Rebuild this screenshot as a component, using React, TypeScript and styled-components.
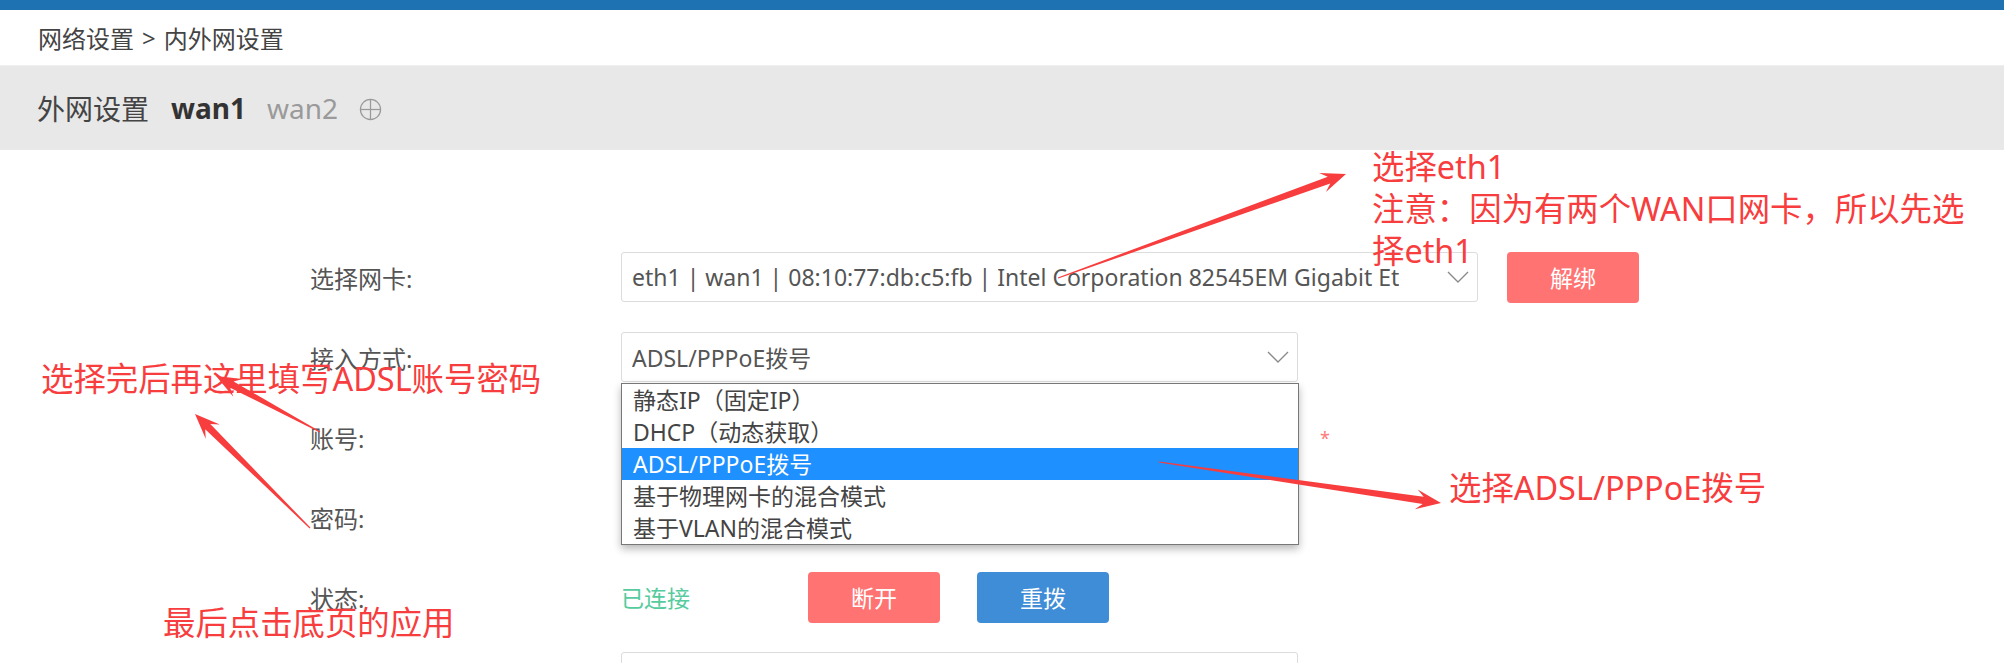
import React from 'react';
import styled, { createGlobalStyle } from 'styled-components';

const GlobalStyle = createGlobalStyle`
  html, body { margin: 0; padding: 0; background: #fff; }
  body { font-family: "Noto Sans", "Noto Sans CJK SC", sans-serif; }
  * { box-sizing: border-box; }
`;

const FONT = `"Noto Sans", "Noto Sans CJK SC", sans-serif`;

const Page = styled.div`
  position: relative;
  width: 2004px;
  height: 663px;
  overflow: hidden;
  background: #fff;
  font-family: ${FONT};
`;

const TopBar = styled.div`
  height: 10px;
  background: #1e72b2;
`;

const Breadcrumb = styled.div`
  height: 55px;
  display: flex;
  align-items: center;
  padding-left: 38px;
  font-size: 24px;
  color: #444;
  gap: 8px;
`;

const TabBar = styled.div`
  height: 85px;
  background: #e8e8e8;
  display: flex;
  align-items: center;
  padding-left: 37px;
  border-top: 1px solid #f0f0f0;
`;

const TabTitle = styled.span`
  font-size: 28px;
  color: #444;
  margin-right: 22px;
`;

const Tab = styled.span<{ $active?: boolean }>`
  font-size: 28px;
  font-weight: ${(p) => (p.$active ? 700 : 400)};
  color: ${(p) => (p.$active ? '#333' : '#9a9a9a')};
  margin-right: 21px;
`;

const AddIcon = styled.svg`
  width: 23px;
  height: 23px;
  margin-top: 3px;
`;

const Form = styled.div`
  display: flex;
  flex-direction: column;
  gap: 30px;
  padding: 102px 0 0 310px;
`;

const Row = styled.div`
  display: flex;
  align-items: center;
  height: 50px;
`;

const Label = styled.div`
  width: 311px;
  font-size: 24px;
  color: #555;
`;

const SelectBox = styled.div<{ $w: number }>`
  position: relative;
  width: ${(p) => p.$w}px;
  height: 50px;
  border: 1px solid #dcdcdc;
  border-radius: 3px;
  display: flex;
  align-items: center;
  padding: 0 46px 0 10px;
  font-size: 23px;
  color: #555;
  background: #fff;
`;

const SelectText = styled.div`
  white-space: nowrap;
  overflow: hidden;
`;

const Chevron = styled.svg`
  position: absolute;
  right: 8px;
  top: 18px;
  width: 22px;
  height: 12px;
`;

const InputBox = styled.div`
  width: 677px;
  height: 50px;
  border: 1px solid #dcdcdc;
  border-radius: 3px;
  background: #fff;
`;

const Button = styled.button<{ $color: string; $ml?: number }>`
  width: 132px;
  height: 51px;
  margin-left: ${(p) => p.$ml ?? 0}px;
  border: none;
  border-radius: 4px;
  background: ${(p) => p.$color};
  color: #fff;
  font-family: ${FONT};
  font-size: 23px;
  padding: 0;
`;

const SelectWrap = styled.div`
  position: relative;
`;

const DropList = styled.div`
  position: absolute;
  left: 0;
  top: calc(100% + 1px);
  width: 678px;
  border: 1px solid #777;
  background: #fff;
  box-shadow: 0 4px 8px rgba(0, 0, 0, 0.28);
  z-index: 10;
`;

const Option = styled.div<{ $selected?: boolean }>`
  height: 32px;
  line-height: 32px;
  padding-left: 11px;
  font-size: 23px;
  color: ${(p) => (p.$selected ? '#fff' : '#444')};
  background: ${(p) => (p.$selected ? '#1e90ff' : 'transparent')};
  white-space: nowrap;
`;

const Required = styled.span`
  margin-left: 22px;
  margin-top: 2px;
  font-size: 18px;
  color: #ff7b7b;
`;

const StatusText = styled.span`
  width: 187px;
  font-size: 23px;
  color: #55cb9e;
`;

const Note = styled.div<{ $x: number; $y: number }>`
  position: absolute;
  left: ${(p) => p.$x}px;
  top: ${(p) => p.$y}px;
  font-size: 32.4px;
  line-height: 42px;
  color: #f73d3d;
  white-space: nowrap;
  z-index: 20;
`;

const Overlay = styled.svg`
  position: absolute;
  left: 0;
  top: 0;
  width: 2004px;
  height: 663px;
  pointer-events: none;
  z-index: 30;
`;

function arrowPoints(x1: number, y1: number, x2: number, y2: number) {
  const dx = x2 - x1;
  const dy = y2 - y1;
  const L = Math.hypot(dx, dy);
  const ux = dx / L;
  const uy = dy / L;
  const px = -uy;
  const py = ux;
  const headLen = 25;
  const headW = 10;
  const shaftW = 3.6;
  const startW = 0.5;
  const bx = x2 - ux * headLen;
  const by = y2 - uy * headLen;
  const sx = x2 - ux * (headLen - 7);
  const sy = y2 - uy * (headLen - 7);
  const pts = [
    [x1 + px * startW, y1 + py * startW],
    [sx + px * shaftW, sy + py * shaftW],
    [bx + px * headW, by + py * headW],
    [x2, y2],
    [bx - px * headW, by - py * headW],
    [sx - px * shaftW, sy - py * shaftW],
    [x1 - px * startW, y1 - py * startW],
  ];
  return pts.map((p) => `${p[0].toFixed(1)},${p[1].toFixed(1)}`).join(' ');
}

const arrows: [number, number, number, number][] = [
  [1058, 278, 1346, 174],
  [320, 432, 216, 376],
  [310, 528, 195, 414],
  [1159, 462, 1441, 503],
];

const options = [
  '静态IP（固定IP）',
  'DHCP（动态获取）',
  'ADSL/PPPoE拨号',
  '基于物理网卡的混合模式',
  '基于VLAN的混合模式',
];

const ChevronIcon = () => (
  <Chevron viewBox="0 0 22 12">
    <polyline points="1,1 11,11 21,1" fill="none" stroke="#8a8a8a" strokeWidth="1.4" />
  </Chevron>
);

export default function App() {
  return (
    <Page>
      <GlobalStyle />
      <TopBar />
      <Breadcrumb>
        <span>网络设置</span>
        <span>&gt;</span>
        <span>内外网设置</span>
      </Breadcrumb>
      <TabBar>
        <TabTitle>外网设置</TabTitle>
        <Tab $active>wan1</Tab>
        <Tab>wan2</Tab>
        <AddIcon viewBox="0 0 24 24">
          <circle cx="12" cy="12" r="10.5" fill="none" stroke="#9a9a9a" strokeWidth="1.3" />
          <line x1="12" y1="1.5" x2="12" y2="22.5" stroke="#9a9a9a" strokeWidth="1.3" />
          <line x1="1.5" y1="12" x2="22.5" y2="12" stroke="#9a9a9a" strokeWidth="1.3" />
        </AddIcon>
      </TabBar>
      <Form>
        <Row>
          <Label>选择网卡:</Label>
          <SelectBox $w={857}>
            <SelectText>eth1 | wan1 | 08:10:77:db:c5:fb | Intel Corporation 82545EM Gigabit Et</SelectText>
            <ChevronIcon />
          </SelectBox>
          <Button $color="#ff7373" $ml={29}>解绑</Button>
        </Row>
        <Row>
          <Label>接入方式:</Label>
          <SelectWrap>
            <SelectBox $w={677}>
              <SelectText>ADSL/PPPoE拨号</SelectText>
              <ChevronIcon />
            </SelectBox>
            <DropList>
              {options.map((o) => (
                <Option key={o} $selected={o === 'ADSL/PPPoE拨号'}>
                  {o}
                </Option>
              ))}
            </DropList>
          </SelectWrap>
        </Row>
        <Row>
          <Label>账号:</Label>
          <InputBox />
          <Required>*</Required>
        </Row>
        <Row>
          <Label>密码:</Label>
          <InputBox />
        </Row>
        <Row>
          <Label>状态:</Label>
          <StatusText>已连接</StatusText>
          <Button $color="#ff7373">断开</Button>
          <Button $color="#3f8dd7" $ml={37}>重拨</Button>
        </Row>
        <Row>
          <Label />
          <InputBox />
        </Row>
      </Form>

      <Note $x={1372} $y={145}>
        选择eth1
        <br />
        注意：因为有两个WAN口网卡，所以先选
        <br />
        择eth1
      </Note>
      <Note $x={41} $y={357}>选择完后再这里填写ADSL账号密码</Note>
      <Note $x={163} $y={601}>最后点击底页的应用</Note>
      <Note $x={1449} $y={466}>选择ADSL/PPPoE拨号</Note>

      <Overlay viewBox="0 0 2004 663">
        {arrows.map((a, i) => (
          <polygon key={i} points={arrowPoints(a[0], a[1], a[2], a[3])} fill="#f73d3d" />
        ))}
      </Overlay>
    </Page>
  );
}
